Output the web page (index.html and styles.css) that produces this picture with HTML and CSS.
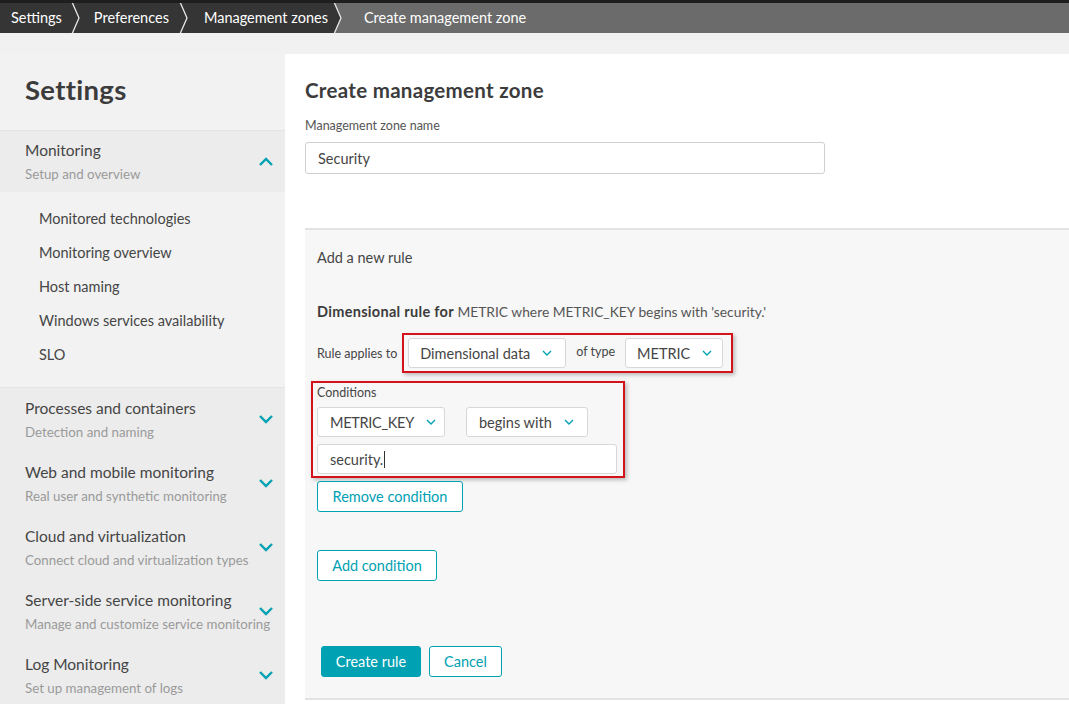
FILE: index.html
```html
<!DOCTYPE html>
<html>
<head>
<meta charset="utf-8">
<link rel="stylesheet" href="styles.css">
</head>
<body>
<div class="topline"></div>
<nav class="crumbs">
  <span class="crumb c1">Settings</span>
  <svg class="sep" width="14" height="30" viewBox="0 0 14 30"><polyline points="2,-1 9,15 2,31" fill="none" stroke="#e8e8e8" stroke-width="1.3"/></svg>
  <span class="crumb c2">Preferences</span>
  <svg class="sep" width="14" height="30" viewBox="0 0 14 30"><polyline points="2,-1 9,15 2,31" fill="none" stroke="#e8e8e8" stroke-width="1.3"/></svg>
  <span class="crumb c3">Management zones</span>
  <svg class="sep last" width="14" height="30" viewBox="0 0 14 30"><polygon points="0,0 2,-1 9,15 2,31 0,30" fill="#353535"/><polyline points="2,-1 9,15 2,31" fill="none" stroke="#e8e8e8" stroke-width="1.3"/></svg>
  <span class="crumb current">Create management zone</span>
</nav>
<div class="band"></div>
<div class="layout">
  <aside class="sidebar">
    <h1 class="side-title">Settings</h1>
    <div class="group open">
      <div class="group-text">
        <div class="g-title">Monitoring</div>
        <div class="g-sub">Setup and overview</div>
      </div>
      <svg class="chev" width="16" height="10" viewBox="0 0 16 10"><polyline points="2,8 8,2 14,8" fill="none" stroke="#00a1b2" stroke-width="2.4"/></svg>
    </div>
    <ul class="sublist">
      <li>Monitored technologies</li>
      <li>Monitoring overview</li>
      <li>Host naming</li>
      <li>Windows services availability</li>
      <li>SLO</li>
    </ul>
    <div class="groups">
      <div class="group">
        <div class="group-text">
          <div class="g-title">Processes and containers</div>
          <div class="g-sub">Detection and naming</div>
        </div>
        <svg class="chev" width="16" height="10" viewBox="0 0 16 10"><polyline points="2,2 8,8 14,2" fill="none" stroke="#00a1b2" stroke-width="2.4"/></svg>
      </div>
      <div class="group">
        <div class="group-text">
          <div class="g-title">Web and mobile monitoring</div>
          <div class="g-sub">Real user and synthetic monitoring</div>
        </div>
        <svg class="chev" width="16" height="10" viewBox="0 0 16 10"><polyline points="2,2 8,8 14,2" fill="none" stroke="#00a1b2" stroke-width="2.4"/></svg>
      </div>
      <div class="group">
        <div class="group-text">
          <div class="g-title">Cloud and virtualization</div>
          <div class="g-sub">Connect cloud and virtualization types</div>
        </div>
        <svg class="chev" width="16" height="10" viewBox="0 0 16 10"><polyline points="2,2 8,8 14,2" fill="none" stroke="#00a1b2" stroke-width="2.4"/></svg>
      </div>
      <div class="group">
        <div class="group-text">
          <div class="g-title">Server-side service monitoring</div>
          <div class="g-sub">Manage and customize service monitoring</div>
        </div>
        <svg class="chev" width="16" height="10" viewBox="0 0 16 10"><polyline points="2,2 8,8 14,2" fill="none" stroke="#00a1b2" stroke-width="2.4"/></svg>
      </div>
      <div class="group">
        <div class="group-text">
          <div class="g-title">Log Monitoring</div>
          <div class="g-sub">Set up management of logs</div>
        </div>
        <svg class="chev" width="16" height="10" viewBox="0 0 16 10"><polyline points="2,2 8,8 14,2" fill="none" stroke="#00a1b2" stroke-width="2.4"/></svg>
      </div>
    </div>
  </aside>
  <main class="main">
    <h2 class="page-title">Create management zone</h2>
    <label class="field-label">Management zone name</label>
    <div class="input name-input">Security</div>
    <section class="rule-panel">
      <div class="panel-head">Add a new rule</div>
      <p class="rule-desc"><b>Dimensional rule for</b> METRIC where METRIC_KEY begins with 'security.'</p>
      <div class="applies">
        <span class="small-label">Rule applies to</span>
        <div class="hl-box applies-box">
          <div class="select sel-dim">Dimensional data<svg class="dd" width="10" height="6" viewBox="0 0 10 6"><polyline points="1,1 5,5 9,1" fill="none" stroke="#00a1b2" stroke-width="1.4"/></svg></div>
          <span class="small-label oftype">of type</span>
          <div class="select sel-metric">METRIC<svg class="dd" width="10" height="6" viewBox="0 0 10 6"><polyline points="1,1 5,5 9,1" fill="none" stroke="#00a1b2" stroke-width="1.4"/></svg></div>
        </div>
      </div>
      <div class="hl-box cond-box">
        <div class="small-label cond-label">Conditions</div>
        <div class="cond-row">
          <div class="select sel-key">METRIC_KEY<svg class="dd" width="10" height="6" viewBox="0 0 10 6"><polyline points="1,1 5,5 9,1" fill="none" stroke="#00a1b2" stroke-width="1.4"/></svg></div>
          <div class="select sel-op">begins with<svg class="dd" width="10" height="6" viewBox="0 0 10 6"><polyline points="1,1 5,5 9,1" fill="none" stroke="#00a1b2" stroke-width="1.4"/></svg></div>
        </div>
        <div class="input cond-input">security.<span class="caret"></span></div>
      </div>
      <button class="btn outline remove-btn">Remove condition</button>
      <button class="btn outline add-btn">Add condition</button>
      <div class="actions">
        <button class="btn primary">Create rule</button>
        <button class="btn outline">Cancel</button>
      </div>
    </section>
  </main>
</div>
</body>
</html>
```
FILE: styles.css
```css
* { box-sizing: border-box; }
html, body { margin: 0; padding: 0; }
body {
  width: 1069px;
  height: 704px;
  overflow: hidden;
  font-family: "Lato", "Open Sans", sans-serif;
  color: #454545;
  background: #fff;
  white-space: nowrap;
}
.topline { height: 3px; background: #1e1e1e; }
.crumbs {
  display: flex;
  height: 30px;
  background: #6b6b6b;
  align-items: stretch;
}
.crumb {
  display: flex;
  align-items: center;
  background: #353535;
  color: #fff;
  font-size: 14.5px;
  padding-bottom: 1px;
}
.c1 { padding-left: 11px; padding-right: 8px; }
.c2 { padding-left: 10px; padding-right: 9px; }
.c3 { padding-left: 12px; padding-right: 4px; }
.sep { display: block; background: #353535; flex: none; }
.sep.last { background: #6b6b6b; }
.crumb.current {
  background: #6b6b6b;
  padding-left: 18px;
  flex: 1;
}
.band { height: 21px; background: #f1f1f1; }
.layout { display: flex; height: 650px; }
.sidebar {
  width: 285px;
  flex: none;
  background: #f2f2f2;
}
.side-title {
  margin: 0;
  padding: 19px 25px 0;
  height: 76px;
  font-size: 27.5px;
  font-weight: 700;
  color: #3c3c3c;
  letter-spacing: 0.3px;
}
.group {
  display: flex;
  align-items: center;
  padding: 0 11px 0 25px;
  height: 64px;
}
.group-text { flex: 1; min-width: 0; }
.group.open {
  background: #ececec;
  border-top: 1px solid #e4e4e4;
  height: 62px;
}
.g-title { font-size: 15.5px; color: #454545; line-height: 20px; }
.g-sub { font-size: 13.3px; color: #9a9a9a; line-height: 20px; margin-top: 4px; }
.chev { flex: none; margin-top: -3px; }
.group.open .chev { margin-top: 0; }
.sublist {
  list-style: none;
  margin: 0;
  padding: 10px 0 15px 39px;
}
.sublist li {
  font-size: 14.5px;
  line-height: 34px;
  color: #454545;
}
.groups {
  background: #ececec;
  border-top: 1px solid #e4e4e4;
}
.main {
  flex: 1;
  background: #fff;
  padding: 20px 0 0 20px;
}
.page-title {
  margin: 0;
  font-size: 20.5px;
  font-weight: 700;
  color: #3c3c3c;
  line-height: 32px;
  height: 44px;
  letter-spacing: 0.3px;
}
.field-label {
  display: block;
  font-size: 12.5px;
  color: #555;
  line-height: 16px;
}
.input {
  border: 1px solid #cfcfcf;
  border-radius: 3px;
  background: #fff;
  font-size: 14.5px;
  color: #454545;
  display: flex;
  align-items: center;
  padding: 0 12px;
}
.name-input {
  width: 520px;
  height: 32px;
  margin-top: 8px;
}
.rule-panel {
  margin-top: 54px;
  background: #f7f7f7;
  border-top: 2px solid #e2e2e2;
  border-bottom: 2px solid #e2e2e2;
  height: 472px;
  padding: 18px 0 0 12px;
}
.panel-head { font-size: 14.5px; line-height: 20px; color: #454545; }
.rule-desc {
  margin: 34px 0 0;
  font-size: 13.8px;
  line-height: 20px;
  color: #555;
}
.rule-desc b { color: #3c3c3c; font-size: 14.5px; letter-spacing: 0.3px; }
.applies {
  display: flex;
  align-items: center;
  margin-top: 11px;
}
.small-label { font-size: 12.5px; color: #454545; }
.hl-box {
  border: 2px solid #d3131b;
  box-shadow: 2px 2px 4px rgba(0,0,0,0.25);
}
.applies-box {
  display: flex;
  align-items: center;
  padding: 3px 8px 3px 4px;
  margin-left: 5px;
}
.select {
  display: flex;
  align-items: center;
  justify-content: space-between;
  height: 30px;
  background: #fff;
  border: 1px solid #d8d8d8;
  border-radius: 3px;
  font-size: 14.5px;
  color: #454545;
  padding: 0 14px 0 11px;
  flex: none;
}
.dd { margin-left: 12px; flex: none; }
.sel-dim { width: 158px; }
.oftype { margin: 0 10px; position: relative; top: -2px; }
.sel-metric { width: 98px; }
.cond-box {
  width: 314px;
  margin: 8px 0 0 -6px;
  padding: 2px 6px 2px 4px;
}
.cond-label { line-height: 16px; margin-bottom: 6px; }
.cond-row { display: flex; gap: 21px; }
.sel-key { width: 128px; letter-spacing: -0.3px; padding-left: 12px; }
.sel-op { width: 122px; padding-left: 12px; }
.cond-input {
  width: 300px;
  height: 30px;
  margin-top: 7px;
  border-color: #d8d8d8;
}
.caret {
  display: inline-block;
  width: 1px;
  height: 17px;
  background: #333;
  margin-left: 1px;
}
.btn {
  font-family: inherit;
  font-size: 14.5px;
  height: 31px;
  border-radius: 3px;
  padding: 0 10px;
  cursor: pointer;
  display: block;
  white-space: nowrap;
}
.outline {
  background: #fff;
  border: 1px solid #00a1b2;
  color: #00a1b2;
}
.primary {
  background: #00a1b2;
  border: 1px solid #00a1b2;
  color: #fff;
}
.remove-btn { margin-top: 3px; width: 146px; }
.add-btn { margin-top: 38px; width: 120px; }
.actions {
  display: flex;
  gap: 8px;
  margin-top: 65px;
  margin-left: 4px;
}
.actions .primary { width: 100px; }
.actions .outline { width: 73px; }
```
